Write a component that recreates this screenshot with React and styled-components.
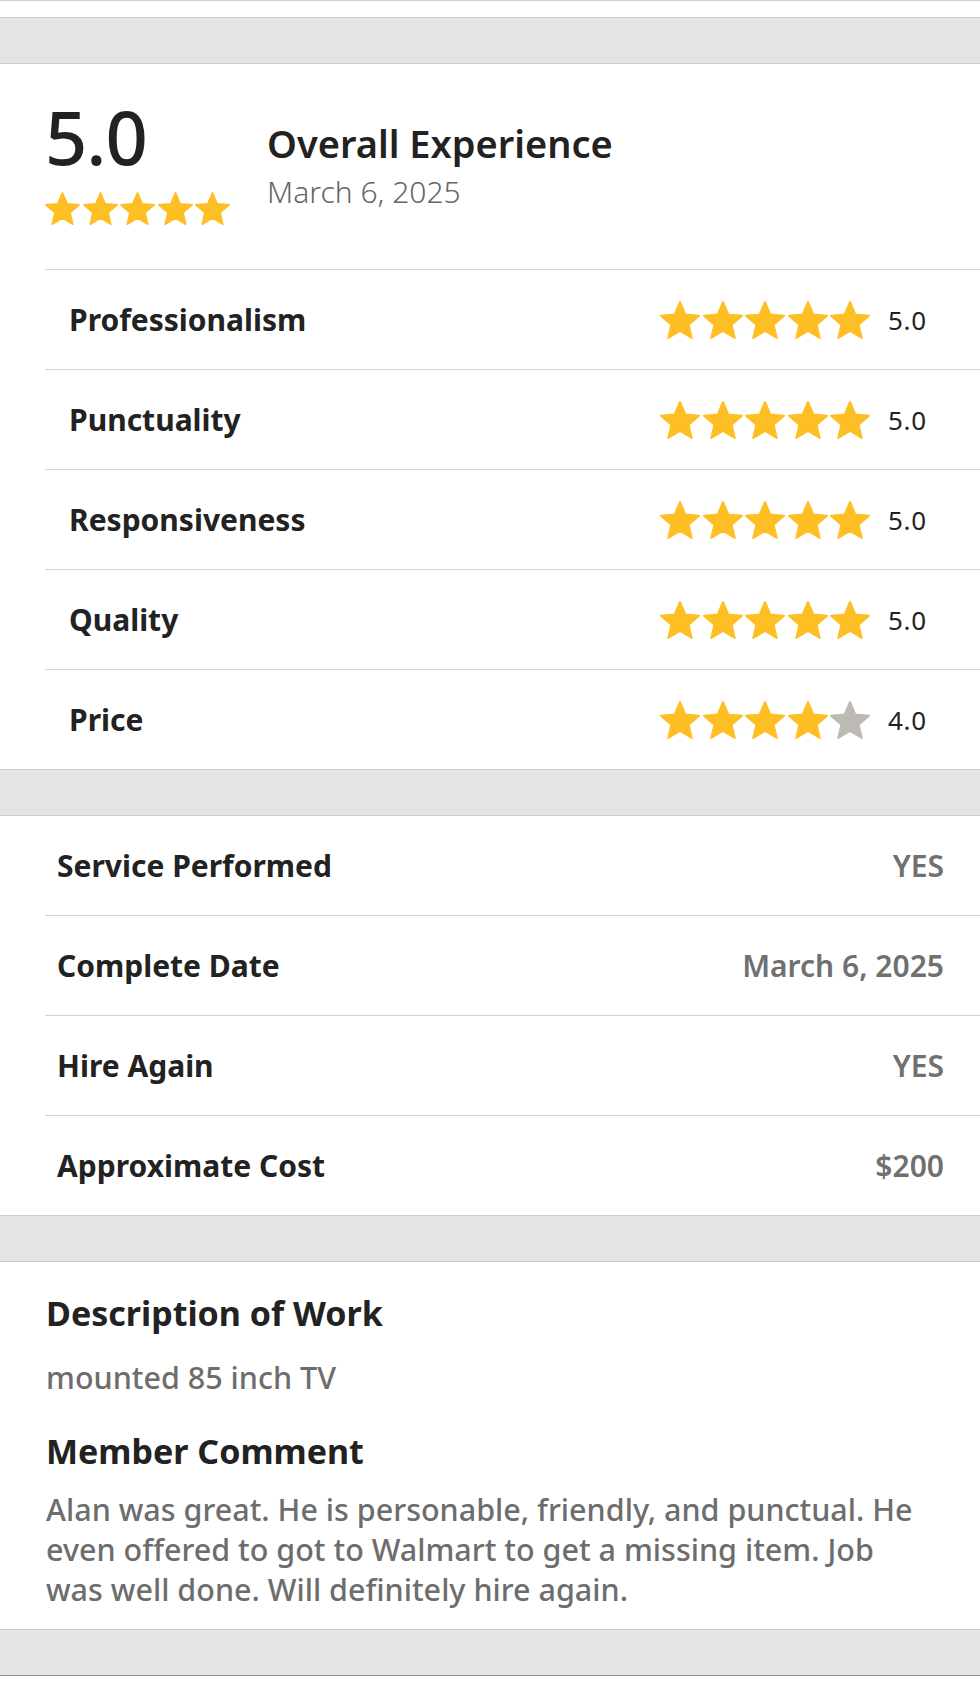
import React from "react";
import styled, { createGlobalStyle } from "styled-components";

const Global = createGlobalStyle`
  html, body { margin: 0; padding: 0; background: #fff; }
  *, *::before, *::after { box-sizing: border-box; }
  body { font-family: "Noto Sans", "Open Sans", Arial, sans-serif; color: #222; }
`;

const Page = styled.div`
  width: 980px;
  background: #fff;
`;

const TopEdge = styled.div`
  height: 17px;
  border-top: 1px solid #cfcfcf;
`;

const Band = styled.div`
  height: 47px;
  background: #e4e4e4;
  border-top: 1px solid #cdcdcd;
  border-bottom: 1px solid ${(p) => (p.$dark ? "#8f8f8f" : "#cdcdcd")};
`;

const Overview = styled.section`
  display: flex;
  padding: 36px 0 0 45px;
  height: 205px;
`;

const ScoreCol = styled.div`
  width: 222px;
  display: flex;
  flex-direction: column;
`;

const BigScore = styled.div`
  font-size: 74px;
  line-height: 73px;
  font-weight: 500;
  letter-spacing: -1px;
  color: #222;
`;

const StarRow = styled.div`
  display: flex;
  gap: ${(p) => p.$gap}px;
  margin-top: ${(p) => p.$top || 0}px;
`;

const TitleCol = styled.div`
  display: flex;
  flex-direction: column;
  padding-top: 19px;
`;

const Title = styled.div`
  font-size: 38px;
  line-height: 48px;
  font-weight: 600;
  color: #222;
`;

const Subtitle = styled.div`
  font-size: 30px;
  line-height: 40px;
  font-weight: 300;
  color: #666;
  margin-top: 5px;
`;

const List = styled.div`
  margin-left: 45px;
`;

const RatingRow = styled.div`
  display: flex;
  align-items: center;
  height: 100px;
  border-top: 1px solid #d3d3d3;
  padding: 0 52px 0 24px;
`;

const Label = styled.div`
  flex: 1;
  font-size: 30px;
  font-weight: 700;
  color: #222;
`;

const RatingValue = styled.div`
  width: 40px;
  margin-left: 18px;
  font-size: 26px;
  letter-spacing: 0.7px;
  font-weight: 400;
  color: #222;
`;

const DetailRow = styled.div`
  display: flex;
  align-items: center;
  justify-content: space-between;
  height: ${(p) => (p.$first ? 99 : 100)}px;
  border-top: ${(p) => (p.$first ? "none" : "1px solid #d3d3d3")};
  padding: 0 36px 0 12px;
`;

const DetailValue = styled.div`
  font-size: 30px;
  font-weight: 600;
  color: #707070;
`;

const TextSection = styled.section`
  padding: 29px 60px 0 46px;
  height: 367px;
`;

const Heading = styled.div`
  font-size: 34px;
  line-height: 44px;
  font-weight: 700;
  color: #222;
  margin-top: ${(p) => p.$top || 0}px;
`;

const Body = styled.div`
  font-size: 30.5px;
  line-height: 40px;
  font-weight: 500;
  color: #6d6d6d;
  margin-top: ${(p) => p.$top || 0}px;
`;

const BottomGap = styled.div`
  height: 11px;
`;

const Star = ({ size, h, filled = true }) => (
  <svg width={size} height={h} viewBox="1.5 1.5 21 20" preserveAspectRatio="none">
    <path
      d="M12 17.27L18.18 21l-1.64-7.03L22 9.24l-7.19-.61L12 2 9.19 8.63 2 9.24l5.46 4.73L5.82 21z"
      fill={filled ? "#fdbf24" : "#bdbab4"}
      stroke={filled ? "#fdbf24" : "#bdbab4"}
      strokeWidth="1"
      strokeLinejoin="round"
    />
  </svg>
);

const Stars = ({ value, size, h, gap, top }) => (
  <StarRow $gap={gap} $top={top}>
    {[1, 2, 3, 4, 5].map((i) => (
      <Star key={i} size={size} h={h} filled={i <= value} />
    ))}
  </StarRow>
);

const ratings = [
  ["Professionalism", 5],
  ["Punctuality", 5],
  ["Responsiveness", 5],
  ["Quality", 5],
  ["Price", 4],
];

const details = [
  ["Service Performed", "YES"],
  ["Complete Date", "March 6, 2025"],
  ["Hire Again", "YES"],
  ["Approximate Cost", "$200"],
];

export default function App() {
  return (
    <Page>
      <Global />
      <TopEdge />
      <Band />
      <Overview>
        <ScoreCol>
          <BigScore>5.0</BigScore>
          <Stars value={5} size={35} h={33} gap={2.5} top={19} />
        </ScoreCol>
        <TitleCol>
          <Title>Overall Experience</Title>
          <Subtitle>March 6, 2025</Subtitle>
        </TitleCol>
      </Overview>
      <List>
        {ratings.map(([label, v]) => (
          <RatingRow key={label}>
            <Label>{label}</Label>
            <Stars value={v} size={40} h={38} gap={2.5} />
            <RatingValue>{v.toFixed(1)}</RatingValue>
          </RatingRow>
        ))}
      </List>
      <Band />
      <List>
        {details.map(([label, v], i) => (
          <DetailRow key={label} $first={i === 0}>
            <Label>{label}</Label>
            <DetailValue>{v}</DetailValue>
          </DetailRow>
        ))}
      </List>
      <Band />
      <TextSection>
        <Heading>Description of Work</Heading>
        <Body $top={22}>mounted 85 inch TV</Body>
        <Heading $top={32}>Member Comment</Heading>
        <Body $top={16}>
          Alan was great. He is personable, friendly, and punctual. He even offered to got to Walmart to get a missing item. Job was well done. Will definitely hire again.
        </Body>
      </TextSection>
      <Band $dark />
      <BottomGap />
    </Page>
  );
}
